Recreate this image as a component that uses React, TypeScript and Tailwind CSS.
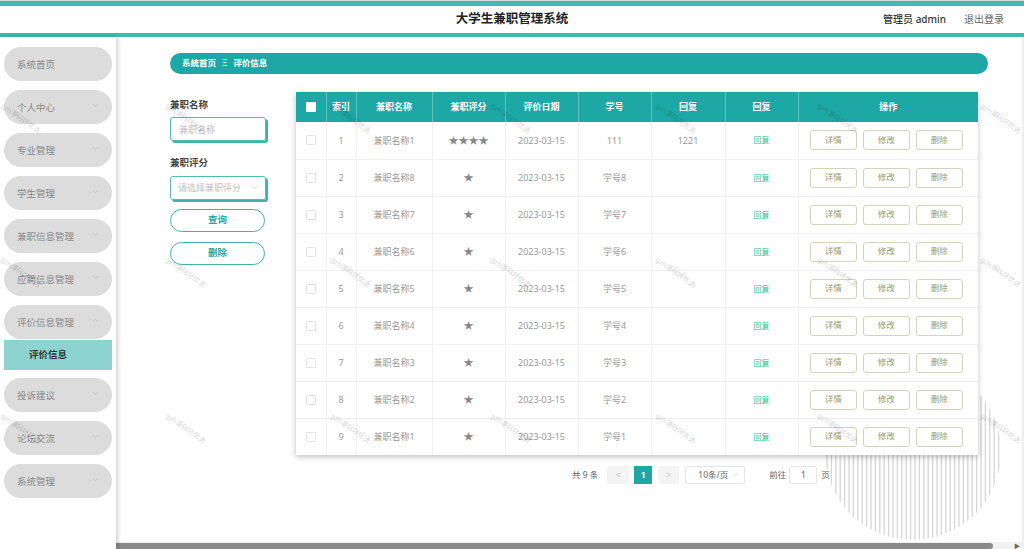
import { ChevronDown, ChevronUp } from 'lucide-react';

const MENU = [
  { label: '系统首页', chevron: false },
  { label: '个人中心', chevron: true },
  { label: '专业管理', chevron: true },
  { label: '学生管理', chevron: true },
  { label: '兼职信息管理', chevron: true },
  { label: '应聘信息管理', chevron: true },
  { label: '评价信息管理', chevron: true, open: true },
  { label: '投诉建议', chevron: true },
  { label: '论坛交流', chevron: true },
  { label: '系统管理', chevron: true },
];

const ROWS = [
  { idx: 1, name: '兼职名称1', stars: '★★★★', no: '111', reply: '1221' },
  { idx: 2, name: '兼职名称8', stars: '★', no: '学号8', reply: '' },
  { idx: 3, name: '兼职名称7', stars: '★', no: '学号7', reply: '' },
  { idx: 4, name: '兼职名称6', stars: '★', no: '学号6', reply: '' },
  { idx: 5, name: '兼职名称5', stars: '★', no: '学号5', reply: '' },
  { idx: 6, name: '兼职名称4', stars: '★', no: '学号4', reply: '' },
  { idx: 7, name: '兼职名称3', stars: '★', no: '学号3', reply: '' },
  { idx: 8, name: '兼职名称2', stars: '★', no: '学号2', reply: '' },
  { idx: 9, name: '兼职名称1', stars: '★', no: '学号1', reply: '' },
];

const COLS = [
  { label: '索引', w: 'w-[30px]' },
  { label: '兼职名称', w: 'w-[76px]' },
  { label: '兼职评分', w: 'w-[73px]' },
  { label: '评价日期', w: 'w-[73px]' },
  { label: '学号', w: 'w-[73px]' },
  { label: '回复', w: 'w-[74px]' },
  { label: '回复', w: 'w-[73px]' },
  { label: '操作', w: 'w-[180px]' },
];

// watermark tiles
const WM_X = [0, 165, 330, 490, 655, 817, 980];
const WM_Y = [103, 257, 413];

function StripedCircle() {
  const lines = [];
  for (let x = 2; x < 176; x += 4.4) lines.push(x);
  return (
    <svg width="176" height="176" viewBox="0 0 176 176" className="absolute left-[709px] top-[327px]">
      <defs>
        <clipPath id="circ">
          <circle cx="88" cy="88" r="88" />
        </clipPath>
      </defs>
      <g clipPath="url(#circ)">
        {lines.map(x => (
          <line key={x} x1={x} y1="0" x2={x} y2="176" stroke="#d6d6d6" strokeWidth="1.3" />
        ))}
      </g>
    </svg>
  );
}

export default function App() {
  return (
    <div
      className="relative w-[1024px] h-[549px] overflow-hidden bg-white flex flex-col"
      style={{ fontFamily: '"Noto Sans", "Noto Sans CJK SC", sans-serif' }}
    >
      {/* Header */}
      <div className="h-[37px] shrink-0 border-t border-[#dcdcdc] bg-white">
        <div className="h-[5px] bg-[#44b7ae]" />
        <div className="h-[27px] flex items-center relative px-5">
          <div className="absolute inset-x-0 text-center text-[12.5px] font-semibold text-[#222]">大学生兼职管理系统</div>
          <div className="ml-auto flex items-center gap-[18px] relative text-[10px]">
            <span className="text-[#333] font-medium">管理员 admin</span>
            <span className="text-[#666]">退出登录</span>
          </div>
        </div>
        <div className="h-[4px] bg-[#44b7ae]" />
      </div>

      <div className="flex flex-1 min-h-0">
        {/* Sidebar */}
        <div className="w-[116px] shrink-0 bg-white shadow-[2px_0_4px_rgba(0,0,0,0.18)] z-10 pt-[10px] pl-[4px] pr-[4px]">
          <div className="flex flex-col">
            {MENU.map(m => (
              <div key={m.label} className="mb-[9px]">
                <div className="h-[34px] rounded-full bg-[#dcdcdc] flex items-center pl-[13px] pr-[12px] pt-[3px]">
                  <span className="text-[9.5px] text-[#888] flex-1">{m.label}</span>
                  {m.chevron && (m.open
                    ? <ChevronUp className="w-[9px] h-[9px] text-[#aaa] -mt-[6px]" strokeWidth={1.5} />
                    : <ChevronDown className="w-[9px] h-[9px] text-[#aaa] -mt-[6px]" strokeWidth={1.5} />)}
                </div>
                {m.open && (
                  <div className="h-[30px] mt-[1px] -mb-[1px] bg-[#8dd3cf] flex items-center pl-[25px] text-[9.5px] font-bold text-[#333]">
                    评价信息
                  </div>
                )}
              </div>
            ))}
          </div>
        </div>

        {/* Main */}
        <div className="relative flex-1 flex flex-col min-w-0 border-r-[2px] border-[#eeeeee]">
          <StripedCircle />
          <div className="relative flex-1 pl-[54px] pr-[34px] pt-[16px]">
            {/* Breadcrumb */}
            <div className="h-[21px] rounded-full bg-[#1da8a5] flex items-center pl-[12px] text-[8.5px] font-bold text-white">
              <span>系统首页</span>
              <span className="mx-[6px] font-normal">Ξ</span>
              <span>评价信息</span>
            </div>

            <div className="flex mt-[18px]">
              {/* Search form */}
              <div className="w-[98px] shrink-0 pt-[6px]">
                <div className="text-[9.5px] font-bold text-[#444] mb-[5px]">兼职名称</div>
                <div className="h-[24px] w-[96px] rounded-[3px] border border-[#52bdb5] shadow-[2px_2px_0_#3cb2aa] flex items-center pl-[8px] text-[9px] text-[#c0c0c0]">
                  兼职名称
                </div>
                <div className="text-[9.5px] font-bold text-[#444] mt-[15px] mb-[5px]">兼职评分</div>
                <div className="h-[24px] w-[96px] rounded-[3px] border border-[#52bdb5] shadow-[2px_2px_0_#3cb2aa] flex items-center pl-[7px] pr-[6px] text-[9px] text-[#c0c0c0]">
                  <span className="flex-1">请选择兼职评分</span>
                  <ChevronDown className="w-[9px] h-[9px] text-[#bbb]" strokeWidth={1.5} />
                </div>
                <button className="mt-[9px] h-[23px] w-[95px] rounded-full border border-[#3db3aa] text-[9.5px] font-bold text-[#2aa79f] flex items-center justify-center">
                  查询
                </button>
                <button className="mt-[10px] h-[23px] w-[95px] rounded-full border border-[#3db3aa] text-[9.5px] font-bold text-[#2aa79f] flex items-center justify-center">
                  删除
                </button>
              </div>

              {/* Table + pagination */}
              <div className="ml-[28px]">
                <div className="w-[682px] bg-white shadow-[0_2px_6px_rgba(0,0,0,0.25)]">
                  <table className="w-[682px] table-fixed border-collapse">
                    <thead>
                      <tr className="h-[30px] bg-[#1da8a5] text-white text-[9px] font-bold">
                        <th className="w-[30px] border-r border-white/30">
                          <div className="w-[10px] h-[10px] bg-white rounded-[1px] mx-auto" />
                        </th>
                        {COLS.map((c, i) => (
                          <th key={i} className={`${c.w} ${i < COLS.length - 1 ? 'border-r border-white/30' : ''} font-bold`}>
                            {c.label}
                          </th>
                        ))}
                      </tr>
                    </thead>
                    <tbody>
                      {ROWS.map(r => (
                        <tr key={r.idx} className="h-[37px] text-[9px] text-[#999] text-center border-b border-[#f0f0f0] last:border-b-0">
                          <td className="border-r border-[#f0f0f0]">
                            <div className="w-[10px] h-[10px] border border-[#e2e2e2] rounded-[1px] mx-auto" />
                          </td>
                          <td className="border-r border-[#f0f0f0]">{r.idx}</td>
                          <td className="border-r border-[#f0f0f0]">{r.name}</td>
                          <td className="border-r border-[#f0f0f0] text-[#888] text-[10px]">{r.stars}</td>
                          <td className="border-r border-[#f0f0f0]">2023-03-15</td>
                          <td className="border-r border-[#f0f0f0]">{r.no}</td>
                          <td className="border-r border-[#f0f0f0]">{r.reply}</td>
                          <td className="border-r border-[#f0f0f0] text-[8px] text-[#21c28c]">回复</td>
                          <td>
                            <div className="flex justify-center gap-[6px] pr-[4px]">
                              {['详情', '修改', '删除'].map(b => (
                                <div key={b} className="w-[47px] h-[20px] rounded-[3px] border border-[#cfd4bb] text-[8.5px] text-[#8f9d72] flex items-center justify-center">
                                  {b}
                                </div>
                              ))}
                            </div>
                          </td>
                        </tr>
                      ))}
                    </tbody>
                  </table>
                </div>

                {/* Pagination */}
                <div className="flex items-center pl-[276px] mt-[11px] text-[8.5px] text-[#606266]">
                  <span className="mr-[9px]">共 9 条</span>
                  <div className="w-[22px] h-[18px] bg-[#f4f4f5] text-[#c0c4cc] flex items-center justify-center mr-[5px]">&lt;</div>
                  <div className="w-[18px] h-[18px] bg-[#1da8a5] text-white font-bold flex items-center justify-center mr-[6px]">1</div>
                  <div className="w-[21px] h-[18px] bg-[#f4f4f5] text-[#c0c4cc] flex items-center justify-center mr-[6px]">&gt;</div>
                  <div className="w-[60px] h-[18px] border border-[#e4e4e4] rounded-[2px] flex items-center pl-[12px] pr-[5px] text-[#666]">
                    <span className="flex-1">10条/页</span>
                    <ChevronDown className="w-[8px] h-[8px] text-[#c0c4cc]" strokeWidth={1.5} />
                  </div>
                  <span className="ml-[24px] mr-[3px]">前往</span>
                  <div className="w-[28px] h-[18px] border border-[#e4e4e4] rounded-[2px] flex items-center justify-center">1</div>
                  <span className="ml-[4px]">页</span>
                </div>
              </div>
            </div>
          </div>

          {/* Horizontal scrollbar */}
          <div className="relative h-[7px] shrink-0 bg-[#f1f1f1] flex items-center">
            <div className="h-[6px] w-[877px] bg-[#8a8a8a] rounded-r-full" />
            <span className="absolute right-[2px] text-[6px] text-[#666] leading-none">▶</span>
          </div>
        </div>
      </div>

      {/* Watermark */}
      <div className="absolute inset-0 pointer-events-none z-20">
        {WM_Y.map(y =>
          WM_X.map(x => (
            <span
              key={`${x}-${y}`}
              className="absolute text-[7px] text-black/20 rotate-[35deg] origin-top-left whitespace-nowrap"
              style={{ left: x + 4, top: y - 2 }}
            >
              gzh源码好优选
            </span>
          ))
        )}
      </div>
    </div>
  );
}
